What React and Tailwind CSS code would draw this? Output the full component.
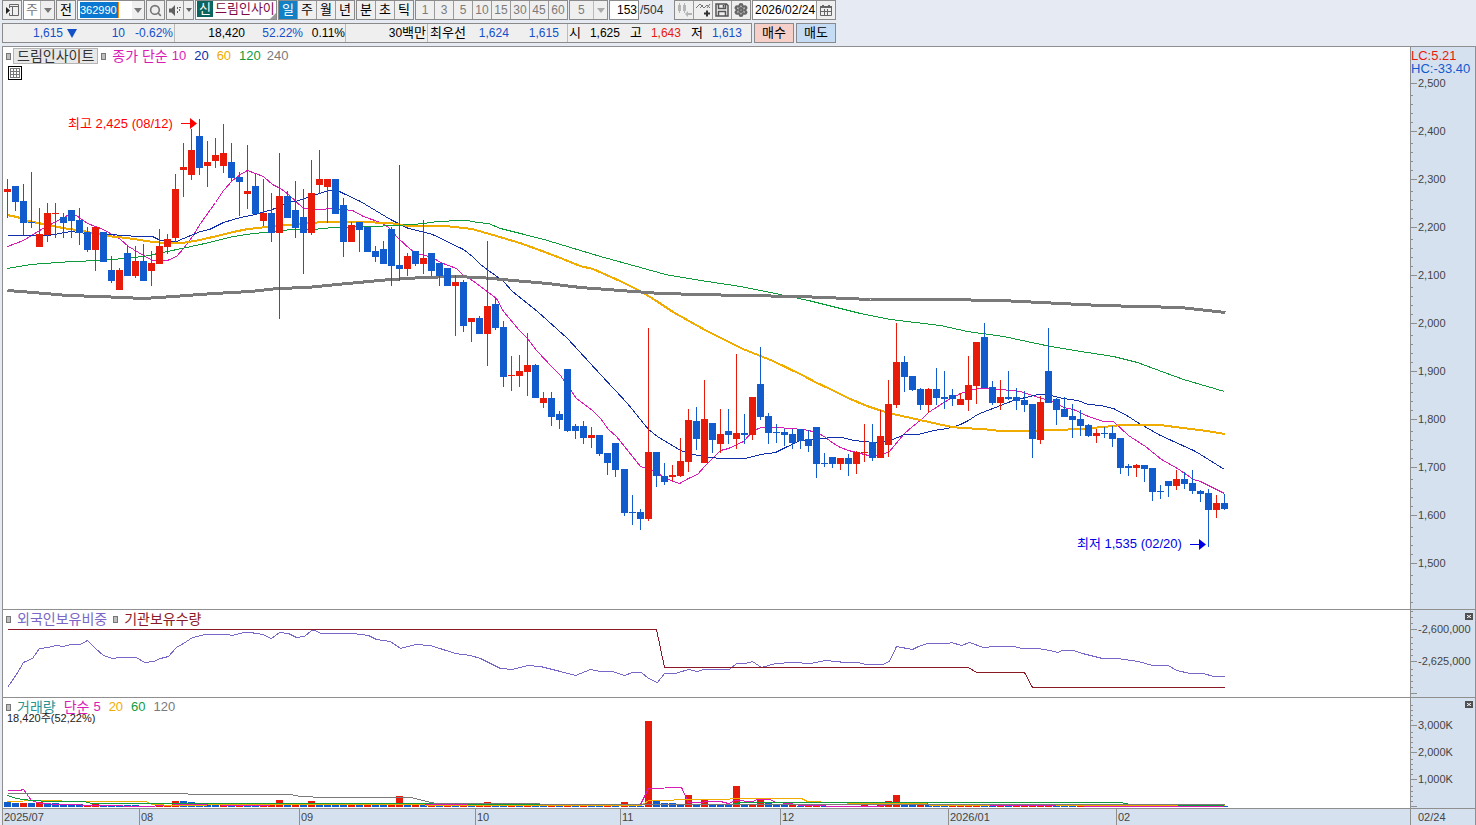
import React from 'react';
import { Search, Settings } from 'lucide-react';

const UP = '#e81a0a';
const DOWN = '#125bcd';
const LINE = '#8f8f8f';

// [direction, high, body top, body bottom, low] in chart pixels
const CANDLES = [
    [1, 179, 189, 192, 218], [0, 186, 186, 202, 211], [0, 184, 201, 223, 235], [0, 172, 222, 223, 228],
    [1, 208, 234, 247, 247], [1, 203, 213, 235, 242], [1, 203, 213, 214, 238], [0, 213, 217, 223, 238],
    [0, 210, 210, 221, 238], [0, 208, 220, 233, 245], [0, 227, 232, 250, 252], [1, 227, 227, 250, 271],
    [0, 232, 232, 262, 262], [0, 256, 270, 281, 283], [1, 268, 270, 290, 290], [0, 245, 253, 276, 276],
    [1, 246, 261, 276, 278], [0, 244, 261, 281, 281], [1, 251, 263, 271, 286], [1, 229, 246, 264, 264],
    [1, 234, 239, 247, 254], [1, 174, 189, 238, 242], [1, 143, 167, 170, 197], [1, 129, 150, 175, 180],
    [0, 119, 136, 168, 175], [1, 141, 162, 166, 187], [1, 138, 155, 161, 168], [1, 124, 153, 166, 173],
    [0, 143, 162, 178, 181], [0, 172, 177, 182, 216], [1, 145, 191, 194, 209], [0, 174, 186, 214, 214],
    [1, 179, 213, 221, 226], [0, 193, 213, 233, 242], [1, 153, 196, 233, 319], [0, 191, 196, 218, 218],
    [0, 181, 210, 228, 238], [0, 189, 217, 233, 274], [1, 160, 193, 233, 235], [1, 150, 179, 185, 194],
    [1, 179, 179, 187, 223], [0, 179, 179, 214, 214], [0, 198, 205, 242, 257], [1, 222, 225, 242, 242],
    [0, 222, 222, 230, 252], [0, 227, 227, 252, 252], [0, 246, 251, 257, 262], [0, 241, 249, 264, 264],
    [0, 227, 229, 266, 286], [0, 165, 265, 269, 281], [1, 253, 256, 269, 276], [0, 251, 251, 264, 266],
    [1, 220, 258, 264, 274], [0, 253, 253, 271, 276], [0, 263, 263, 276, 286], [0, 268, 268, 286, 286],
    [1, 275, 282, 286, 336], [0, 280, 282, 326, 332], [1, 318, 318, 322, 342], [0, 316, 318, 334, 334],
    [1, 241, 306, 334, 366], [0, 298, 304, 328, 330], [0, 321, 327, 377, 387], [1, 356, 375, 376, 391],
    [1, 355, 371, 376, 387], [1, 333, 365, 372, 396], [0, 364, 365, 398, 398], [1, 392, 398, 403, 408],
    [0, 392, 398, 417, 426], [0, 411, 414, 420, 429], [0, 369, 369, 431, 432], [0, 424, 426, 431, 439],
    [0, 421, 426, 438, 444], [1, 427, 435, 438, 448], [0, 435, 435, 454, 456], [0, 453, 453, 463, 475],
    [0, 443, 443, 470, 477], [0, 469, 469, 513, 516], [0, 495, 512, 513, 525], [0, 509, 512, 519, 530],
    [1, 328, 452, 519, 521], [0, 452, 452, 476, 487], [0, 463, 476, 482, 485], [1, 465, 475, 477, 481],
    [1, 438, 461, 476, 477], [1, 409, 420, 462, 472], [0, 407, 421, 439, 450], [1, 380, 419, 463, 463],
    [0, 423, 423, 440, 453], [1, 409, 434, 444, 453], [0, 409, 431, 435, 444], [1, 354, 433, 439, 449],
    [0, 414, 433, 435, 444], [1, 397, 397, 435, 440], [0, 347, 384, 417, 420], [0, 413, 416, 433, 444],
    [0, 424, 432, 433, 443], [0, 429, 432, 435, 446], [0, 429, 434, 443, 449], [0, 429, 429, 441, 449],
    [0, 430, 439, 446, 452], [0, 427, 427, 464, 478], [0, 453, 463, 464, 467], [0, 457, 457, 464, 468],
    [1, 458, 458, 464, 470], [0, 454, 458, 464, 476], [1, 451, 452, 464, 474], [1, 424, 452, 453, 462],
    [0, 424, 442, 458, 461], [1, 410, 436, 458, 458], [1, 380, 404, 445, 457], [1, 323, 362, 405, 408],
    [0, 356, 362, 377, 392], [0, 376, 376, 390, 391], [0, 388, 389, 405, 410], [1, 388, 389, 405, 413],
    [0, 368, 389, 398, 405], [0, 371, 397, 399, 409], [0, 389, 395, 399, 406], [1, 393, 399, 405, 405],
    [1, 356, 385, 400, 411], [1, 342, 342, 386, 404], [0, 323, 337, 388, 388], [0, 381, 387, 403, 405],
    [1, 380, 397, 403, 410], [0, 371, 397, 399, 400], [0, 388, 397, 401, 410], [0, 391, 400, 405, 412],
    [0, 404, 404, 439, 458], [1, 396, 402, 440, 444], [0, 328, 371, 403, 403], [0, 398, 399, 410, 425],
    [0, 397, 409, 417, 417], [0, 404, 416, 420, 438], [0, 410, 419, 426, 436], [0, 424, 425, 436, 437],
    [1, 429, 433, 436, 443], [0, 427, 433, 434, 438], [0, 426, 433, 439, 447], [0, 438, 438, 468, 474],
    [0, 464, 466, 468, 476], [1, 464, 465, 468, 477], [0, 465, 465, 469, 482], [0, 468, 468, 492, 501],
    [0, 485, 491, 492, 499], [0, 481, 481, 486, 497], [1, 470, 479, 486, 490], [0, 472, 479, 484, 489],
    [0, 470, 483, 491, 494], [0, 490, 491, 494, 502], [0, 489, 493, 510, 547], [1, 495, 503, 510, 518],
    [0, 494, 503, 509, 510],
];

// bar heights, negative = volume below the previous day
const VOLUMES = [
    -5, -4, 4, -4, 5, -4, -4, -3, -3, -3, 2, 3, -2, -2, -2, -2, -2, 1, -1, 1,
    1, 6, -6, -5, -3, -3, -3, 3, -1, 1, -1, -1, 2, 2, 7, -3, 3, -3, 6, -3,
    -3, -3, -2, 3, -2, 2, -2, -2, 3, 11, -4, 3, -3, 3, -2, 2, -2, 4, -2, 3,
    5, -3, -3, 2, -2, 2, -2, -1, 2, -1, 3, -2, 1, -1, -1, 1, -1, 5, -1, -1,
    86, -6, -4, -4, -3, 12, -3, 7, -3, -2, -2, 21, -2, 3, 8, -4, -2, -2, 2, -1,
    1, 3, -1, 1, -1, 1, -1, 2, -1, 2, 6, 12, -2, -2, 3, -2, -1, -1, 1, 1,
    3, 3, -3, -1, 2, -1, 1, 1, 2, 1, 1, -1, -1, -1, 1, 1, -1, 1, -1, 1,
    -1, -1, -1, 1, 1, 1, 1, -1, 1, -1, 1, -1, -1,
];

const PRICE_LINES = [
    {
        color: '#da1ab4',
        width: 1,
        points: '7,246 23,240 39,230 50,224 67,215 76,215 87,223 103,229 120,239 128,246 143,255 152,260 167,260 176,256 183,248 192,236 200,223 215,202 223,190 232,180 240,174 247,170 263,176 272,184 280,188 288,194 303,208 320,209 332,208 352,210 363,216 380,222 388,227 398,238 410,249 417,253 432,257 440,262 456,268 463,275 472,280 488,292 496,298 503,311 519,330 527,338 536,350 552,367 560,375 576,398 592,410 600,418 608,429 616,436 640,466 655,471 665,478 679,483 688,478 697,474 705,465 712,458 720,450 728,448 743,441 753,430 761,427 777,427 803,429 817,432 825,437 833,443 840,447 848,450 868,455 880,455 889,451 904,433 912,426 921,419 928,412 945,401 960,393 977,388 1000,389 1020,391 1032,395 1048,400 1057,403 1063,407 1073,409 1088,416 1103,421 1113,421 1128,435 1145,446 1161,459 1177,468 1193,479 1200,481 1208,485 1224,493',
    },
    {
        color: '#0f2ea8',
        width: 1,
        points: '7,235 48,235 70,231 87,233 110,234 137,236 152,236 160,240 176,241 183,238 200,231 209,229 223,222 240,217 255,214 272,209 287,202 295,201 310,196 328,190 337,190 343,193 360,201 390,219 408,228 417,230 432,234 463,249 472,256 480,264 503,281 512,291 537,311 567,338 600,374 627,403 648,429 657,436 680,450 697,455 710,457 720,458 745,458 760,454 775,452 785,447 800,440 820,438 833,437 842,437 853,440 873,442 890,440 904,434 918,434 933,430 947,428 960,424 968,420 977,414 1000,405 1013,400 1025,397 1038,394 1050,395 1063,398 1077,400 1088,404 1100,405 1113,408 1128,416 1137,422 1160,435 1193,450 1200,454 1208,459 1224,469',
    },
    {
        color: '#f0ac00',
        width: 2,
        points: '7,215 17,217 28,221 43,224 63,228 83,231 107,236 127,238 153,242 167,243 182,243 200,240 217,236 233,232 248,229 267,227 287,225 300,224 323,222 360,222 390,223 408,226 445,226 472,229 493,235 520,243 542,251 563,259 580,266 593,269 620,281 640,291 655,300 673,312 705,330 743,349 773,361 802,375 817,383 828,388 848,398 867,406 882,411 893,414 920,420 947,426 960,428 983,429 1000,431 1020,431 1057,430 1080,429 1103,427 1122,425 1160,425 1183,428 1207,431 1225,434',
    },
    {
        color: '#0f9b3c',
        width: 1,
        points: '7,268 30,264 72,261 100,260 123,258 143,256 167,251 200,244 233,236 253,233 277,231 290,229 313,229 333,227 373,226 413,224 423,223 437,221 460,220 467,220 477,222 488,223 500,228 520,233 547,240 570,247 600,256 640,267 665,274 700,280 740,286 770,292 808,300 860,313 890,319 940,325 967,331 1003,336 1050,346 1087,352 1113,356 1137,362 1153,368 1183,379 1207,386 1224,391',
    },
    {
        color: '#7a7a7a',
        width: 3,
        points: '7,290 33,292 67,295 100,296 143,298 173,296 213,293 250,291 277,288 307,287 347,283 390,279 423,277 453,276 480,277 513,280 547,283 580,287 620,290 660,293 740,295 800,296 870,299 940,299 1000,300 1040,302 1100,305 1180,307 1225,312',
    },
];

const HOLDING_LINES = [
    {
        color: '#7a66c6',
        points: '7,687 16,674 23,662 32,658 39,648 48,647 55,645 63,646 70,644 80,644 87,640 95,648 103,655 112,658 120,657 136,657 144,662 153,661 160,658 168,656 176,647 183,643 192,637 205,634 227,634 232,635 243,632 250,632 262,634 271,638 279,632 288,633 296,637 304,636 311,630 315,630 320,633 352,633 368,635 376,639 390,641 400,648 415,644 430,645 455,653 470,655 480,658 490,663 500,668 512,669 527,665 540,666 560,671 575,675 590,669 600,671 612,671 624,675 632,672 641,672 648,678 657,682 664,673 675,673 688,669 697,671 703,669 729,669 736,663 745,663 752,661 761,667 775,663 792,662 810,663 825,660 845,662 858,662 865,664 882,664 889,661 896,646 912,649 918,646 927,643 948,643 951,642 961,645 969,642 983,647 995,646 1013,646 1022,648 1037,648 1050,650 1057,652 1062,650 1073,650 1082,653 1102,658 1117,658 1138,661 1152,665 1168,665 1176,670 1190,673 1203,673 1213,676 1224,676',
    },
    {
        color: '#8a1a28',
        points: '7,629 656,629 664,667 968,667 976,672 1024,672 1032,687 1224,687',
    },
];

const VOLUME_LINES = [
    {
        color: '#da1ab4',
        points: '7,790 19,790 23,789 31,800 40,803 60,804 100,805 145,806 165,805 180,804 260,805 280,804 390,804 400,803 440,804 640,804 648,788 681,787 688,802 720,801 728,803 735,800 752,801 757,799 770,799 775,802 790,803 800,805 850,806 876,806 888,804 925,803 935,805 1224,806',
    },
    {
        color: '#f0ac00',
        points: '7,801 40,800 83,801 145,801 152,804 175,805 240,804 600,805 641,805 648,800 700,799 760,798 801,798 807,801 860,803 925,803 930,805 1050,804 1060,805 1224,805',
    },
    {
        color: '#0f9b3c',
        points: '7,795 16,798 31,800 50,801 83,801 92,803 330,803 600,804 732,804 740,802 1120,802 1130,804 1224,805',
    },
    {
        color: '#7a7a7a',
        points: '7,793 83,793 290,794 300,796 325,797 410,797 435,803 640,804 1224,804',
    },
];

const MONTHS = [
    { label: '2025/07', cell: 'w-[136px]' },
    { label: '08', cell: 'w-[160px] border-l' },
    { label: '09', cell: 'w-[176px] border-l' },
    { label: '10', cell: 'w-[145px] border-l' },
    { label: '11', cell: 'w-[160px] border-l' },
    { label: '12', cell: 'w-[168px] border-l' },
    { label: '2026/01', cell: 'w-[168px] border-l' },
    { label: '02', cell: 'flex-1 border-l' },
];

const PRICES = ['2,500', '2,400', '2,300', '2,200', '2,100', '2,000', '1,900', '1,800', '1,700', '1,600', '1,500'];

const candleX = (i) => 7 + i * 8 + (i >= 77 ? 1 : 0);

// step offsets below each major tick
const minorTicks = (majors, steps) => majors.flatMap((y) => steps.map((s) => y + s));

const PRICE_MAJORS = PRICES.map((_, i) => 36 + i * 48);

const Polyline = ({ color, width = 1, points }) => (
    <polyline
        points={points}
        fill="none"
        stroke={color}
        strokeWidth={width}
        shapeRendering="crispEdges"
        transform={width === 2 ? undefined : 'translate(0.5 0.5)'}
    />
);

const Ticks = ({ majors, minors }) => (
    <svg className="col-start-1 row-start-1 h-0 min-h-full w-2" shapeRendering="crispEdges" aria-hidden="true">
        {minors.map((y) => <rect key={y} x="0" y={y} width="2" height="1" fill={LINE} />)}
        {majors.map((y) => <rect key={y} x="0" y={y} width="6" height="1" fill={LINE} />)}
    </svg>
);

const Caret = ({ className = 'text-[#777]' }) => (
    <svg viewBox="0 0 8 5" className={`pointer-events-none h-[5px] w-2 shrink-0 ${className}`} fill="currentColor" aria-hidden="true">
        <path d="M0 0h8L4 5z" />
    </svg>
);

const Marker = () => <span className="h-[7px] w-[5px] shrink-0 border border-[#777] bg-[#bdbdbd]" />;

const ToolButton = ({ label, children, className = 'bg-[#efefef] text-black' }) => (
    <button
        type="button"
        aria-label={label}
        className={`flex h-full flex-1 items-center justify-center border-l border-[#9a9a9a] first:border-l-0 ${className}`}
    >
        {children}
    </button>
);

const box = 'flex h-5 shrink-0 items-stretch border border-[#8a8a8a]';

const CloseButton = () => (
    <button type="button" aria-label="닫기" className="col-start-1 row-start-1 mt-[3px] mr-0.5 flex h-[7px] w-2 items-center justify-center self-start justify-self-end bg-[#505050]">
        <svg viewBox="0 0 4 3" className="h-[3px] w-1" stroke="#fff" strokeWidth="1" aria-hidden="true">
            <path d="M0 0l4 3M4 0L0 3" />
        </svg>
    </button>
);

const Toolbar = () => (
    <div className="flex h-5 items-center gap-px pl-0.5 text-[13px] leading-4">
        <div className={`${box} w-5`}>
            <ToolButton label="화면 이동">
                <svg viewBox="0 0 14 12" className="h-3 w-3.5" fill="none" stroke="#333" aria-hidden="true">
                    <path d="M4.5 4V.5h9v11h-9V9M4.5 2.5h9M7.5 2.5v9" stroke="#666" />
                    <path d="M1 3l4 3.500L1 10z" fill="#222" stroke="none" />
                </svg>
            </ToolButton>
        </div>
        <div className={`${box} w-8 bg-white`}>
            <select aria-label="종목 구분" className="w-4 appearance-none bg-white pl-0.5 text-[#777] outline-none">
                <option>주</option>
            </select>
            <span className="flex flex-1 items-center justify-center border-l border-[#bbb] bg-[#efefef]"><Caret /></span>
        </div>
        <div className={`${box} w-5`}><ToolButton>전</ToolButton></div>
        <div className={`${box} w-[68px] items-center bg-white`}>
            <label className="flex flex-1 items-center pl-0.5">
                <span className="sr-only">종목코드</span>
                <input
                    defaultValue="362990"
                    className="h-4 w-[39px] border-r border-orange-400 bg-[#0a78d0] p-0 text-[11px] text-white outline-none"
                />
            </label>
            <span className="flex h-full w-3 items-center justify-center bg-[#efefef]"><Caret /></span>
        </div>
        <div className={`${box} w-[19px]`}>
            <ToolButton label="종목 검색"><Search size={13} className="shrink-0 text-[#777]" strokeWidth={3} /></ToolButton>
        </div>
        <div className={`${box} w-7`}>
            <ToolButton label="소리">
                <svg viewBox="0 0 13 11" className="h-[11px] w-[13px]" fill="#606060" aria-hidden="true">
                    <path d="M0 3.500h2.500L6 0v11L2.500 7.500H0zM8 2h1v2H8zM8 6h1v2H8zM10 2h2v1h-2zM10 4h1v2h-1z" />
                </svg>
            </ToolButton>
            <span className="flex w-[10px] items-center justify-center border-l border-[#9a9a9a] bg-[#efefef]">
                <svg viewBox="0 0 6 4" className="h-1 w-1.5" fill="#666" aria-hidden="true"><path d="M0 0h6L3 4z" /></svg>
            </span>
        </div>
        <div className={`${box} relative w-[82px] items-center gap-0.5 overflow-hidden bg-white pl-px whitespace-nowrap`}>
            <span className="flex h-4 w-4 shrink-0 items-center justify-center bg-[#0a6560] text-white">신</span>
            <span className="text-[13px] leading-4 text-[#7d0a45]">드림인사이</span>
            <svg viewBox="0 0 6 6" className="absolute right-0 bottom-0 h-1.5 w-1.5" fill="#999" aria-hidden="true"><path d="M6 0v6H0z" /></svg>
        </div>
        <div className={`${box} w-[77px]`}>
            <ToolButton className="bg-[#1180c4] text-white">일</ToolButton>
            <ToolButton>주</ToolButton>
            <ToolButton>월</ToolButton>
            <ToolButton>년</ToolButton>
        </div>
        <div className={`${box} w-[58px]`}>
            <ToolButton>분</ToolButton>
            <ToolButton>초</ToolButton>
            <ToolButton>틱</ToolButton>
        </div>
        <div className={`${box} w-[153px] text-xs`}>
            {['1', '3', '5', '10', '15', '30', '45', '60'].map((n) => (
                <ToolButton key={n} className="bg-[#efefef] text-[#7b7b7b]">{n}</ToolButton>
            ))}
        </div>
        <div className={`${box} w-[39px] text-xs text-[#7b7b7b]`}>
            <select aria-label="분봉" className="w-[23px] appearance-none bg-[#efefef] pl-2 outline-none">
                <option>5</option>
            </select>
            <span className="flex flex-1 items-center justify-center border-l border-[#bbb] bg-[#efefef]"><Caret className="text-[#aaa]" /></span>
        </div>
        <div className={`${box} w-[30px] bg-white text-xs`}>
            <input aria-label="봉 개수" defaultValue="153" className="w-full bg-white p-0 pr-px text-right outline-none" />
        </div>
        <span className="w-[33px] text-xs leading-4 text-[#333]">/504</span>
        <div className={`${box} w-[77px]`}>
            <ToolButton label="봉 유형">
                <svg viewBox="0 0 15 14" className="h-3.5 w-[15px]" fill="#b5b5b5" aria-hidden="true">
                    <path d="M2 0h1v10H2zM1 2h3v6H1zM7 0h1v10H7zM6 2h3v6H6zM8 11l3-3v2h4v2h-4v2z" />
                </svg>
            </ToolButton>
            <ToolButton label="지표 추가">
                <svg viewBox="0 0 15 14" className="h-3.5 w-[15px]" fill="none" aria-hidden="true">
                    <path d="M0 5l4-4 4 4 3-3 3 3M4 5l3-3M11 5l3-4" stroke="#777" />
                    <path d="M8 10.500h6M11 7.500v6" stroke="#333" strokeWidth="2" />
                </svg>
            </ToolButton>
            <ToolButton label="저장">
                <svg viewBox="0 0 14 14" className="h-3.5 w-3.5" fill="none" stroke="#555" strokeWidth="1.500" aria-hidden="true">
                    <path d="M1 1h10.500L13 2.500V13H1zM3.500 1v4.500h7V1M3.500 13V8.500h7V13M8.500 2v2.500" />
                </svg>
            </ToolButton>
            <ToolButton label="설정"><Settings size={14} strokeWidth={4} className="shrink-0 text-[#666]" /></ToolButton>
        </div>
        <div className={`${box} w-[84px] bg-white`}>
            <input aria-label="조회일" defaultValue="2026/02/24" className="w-[63px] bg-white p-0 pl-0.5 text-xs outline-none" />
            <ToolButton label="달력">
                <svg viewBox="0 0 12 11" className="h-[11px] w-3" fill="none" stroke="#666" aria-hidden="true">
                    <path d="M.5 2.500h11v8H.5zM4.500 4v6M7.500 4v6M1 6.500h10" />
                    <path d="M0 2h12M3 0v2M9 0v2" strokeWidth="2" />
                </svg>
            </ToolButton>
        </div>
    </div>
);

const QuoteBar = () => (
    <div className="flex h-5 items-stretch gap-0.5 pl-0.5 text-xs">
        <div className="flex w-[750px] shrink-0 items-center border border-[#8a8a8a] bg-[#efefef] text-[#1450c8]">
            <div className="flex h-full w-[172px] items-center border-r border-[#bbb]">
                <span className="w-[60px] text-right">1,615</span>
                <svg viewBox="0 0 10 9" className="ml-1 h-[9px] w-2.5" fill="currentColor" aria-hidden="true"><path d="M0 0h10L5 9z" /></svg>
                <span className="w-12 text-right">10</span>
                <span className="w-12 text-right">-0.62%</span>
            </div>
            <div className="flex h-full w-[171px] items-center border-r border-[#bbb]">
                <span className="w-[70px] text-right text-black">18,420</span>
                <span className="w-[58px] text-right">52.22%</span>
                <span className="flex-1 text-right text-black">0.11%</span>
            </div>
            <div className="flex h-full w-[82px] items-center justify-end border-r border-[#bbb] pr-px text-black">
                30<span className="text-[13px]">백만</span>
            </div>
            <div className="flex h-full w-[140px] items-center border-r border-[#bbb] pl-0.5">
                <span className="text-[13px] text-black">최우선</span>
                <span className="w-[43px] text-right">1,624</span>
                <span className="w-[50px] text-right">1,615</span>
            </div>
            <div className="flex h-full flex-1 items-center pl-px">
                <span className="text-[13px] text-black">시</span>
                <span className="w-[39px] text-right text-black">1,625</span>
                <span className="ml-2.5 text-[13px] text-black">고</span>
                <span className="w-[39px] text-right text-[#e81a0a]">1,643</span>
                <span className="ml-2.5 text-[13px] text-black">저</span>
                <span className="w-[39px] text-right">1,613</span>
            </div>
        </div>
        <button type="button" className="w-10 border border-[#8a8a8a] bg-[#f6cfc9] text-[13px] leading-4">매수</button>
        <button type="button" className="w-10 border border-[#8a8a8a] bg-[#c6dcf4] text-[13px] leading-4">매도</button>
    </div>
);

const PricePanel = () => (
    <div className="relative min-w-0 flex-1 overflow-hidden bg-white">
        <svg className="block h-[562px] w-full" role="img" aria-label="드림인사이트 일봉 차트">
            <g transform="translate(-3 -47)">
                {PRICE_LINES.map((l) => <Polyline key={l.color} {...l} />)}
                <g shapeRendering="crispEdges">
                    {CANDLES.map(([up, high, top, bottom, low], i) => (
                        <g key={i} fill={up ? UP : DOWN}>
                            <rect x={candleX(i)} y={high} width="1" height={low - high} />
                            <rect x={candleX(i) - 3} y={top} width="7" height={bottom - top} />
                        </g>
                    ))}
                </g>
                <g fill="#f00" className="text-[13px]">
                    <text x="68" y="128">최고 2,425 (08/12)</text>
                    <path d="M181 123h9v-5l7 5.500l-7 5.500v-5h-9z" />
                </g>
                <g fill="#0000e6" className="text-[13px]">
                    <text x="1077" y="548">최저 1,535 (02/20)</text>
                    <path d="M1190 544h9v-5l7 5.500l-7 5.500v-5h-9z" />
                </g>
            </g>
        </svg>
        <div className="absolute top-px left-[3px] flex h-4 items-center text-[13px] leading-4">
            <Marker />
            <span className="ml-0.5 h-4 border border-[#b5b5b5] bg-[#e8e8e8] px-[3px] text-sm leading-[14px] text-[#333]">드림인사이트</span>
            <span className="ml-[3px] flex"><Marker /></span>
            <span className="ml-1.5 text-sm leading-4 text-[#da1ab4]">종가 단순</span>
            <span className="ml-1 text-[#da1ab4]">10</span>
            <span className="ml-2 text-[#0f2ea8]">20</span>
            <span className="ml-2 text-[#f0ac00]">60</span>
            <span className="ml-2 text-[#0f9b3c]">120</span>
            <span className="ml-1.5 text-[#7a7a7a]">240</span>
        </div>
        <button type="button" aria-label="데이터 표" className="absolute top-[19px] left-[5px] h-3.5 w-3.5 bg-white">
            <svg viewBox="0 0 14 14" className="h-3.5 w-3.5" fill="none" shapeRendering="crispEdges" aria-hidden="true">
                <path d="M.5.5h13v13H.5z" stroke="#000" />
                <path d="M2.500 2.500h9v9h-9zM2.500 5.500h9M2.500 8.500h9M5.500 2.500v9M8.500 2.500v9" stroke="#777" />
            </svg>
        </button>
    </div>
);

const axisBox = 'grid w-[66px] shrink-0 border-x border-[#8f8f8f] bg-[#d6e1ef] text-[11px] leading-4 text-[#444]';

export default function App() {
    return (
        <main className="min-h-screen bg-[#e6eaf2] font-['Liberation_Sans','Noto_Sans_CJK_KR',sans-serif] text-black">
            <header className="flex flex-col gap-[3px] overflow-hidden pb-[3px]">
                <Toolbar />
                <QuoteBar />
            </header>

            <section className="ml-0.5 border-t border-[#8f8f8f]">
                <div className="flex border-b border-[#8f8f8f]">
                    <div className="flex min-w-0 flex-1 border-l border-[#8f8f8f]"><PricePanel /></div>
                    <div className={axisBox}>
                        <Ticks
                            majors={PRICE_MAJORS}
                            minors={minorTicks(PRICE_MAJORS, [12, 21, 30, 39]).filter((y) => y < 562)}
                        />
                        <div className="col-start-1 row-start-1 flex flex-col">
                            <div className="h-7 pt-0.5 text-[13px] leading-[13px]">
                                <div className="text-[#e81a0a]">LC:5.21</div>
                                <div className="text-[#125bcd]">HC:-33.40</div>
                            </div>
                            <div className="flex flex-col gap-8 pl-[7px]">
                                {PRICES.map((p) => <span key={p}>{p}</span>)}
                            </div>
                        </div>
                    </div>
                </div>

                {/* Foreign / institution holdings */}
                <div className="flex border-b border-[#8f8f8f]">
                    <div className="relative min-w-0 flex-1 border-l border-[#8f8f8f] bg-white">
                        <svg className="block h-[87px] w-full" role="img" aria-label="보유 추이">
                            <g transform="translate(-3 -610)">
                                {HOLDING_LINES.map((l) => <Polyline key={l.color} {...l} />)}
                            </g>
                        </svg>
                        <div className="absolute top-px left-[3px] flex items-center text-sm leading-4">
                            <Marker />
                            <span className="ml-1.5 text-[#7a66c6]">외국인보유비중</span>
                            <span className="ml-1.5 flex"><Marker /></span>
                            <span className="ml-1.5 text-[#8a1a28]">기관보유수량</span>
                        </div>
                    </div>
                    <div className={axisBox}>
                        <Ticks
                            majors={[19, 51, 83]}
                            minors={[1, 7, 13, ...minorTicks([19, 51], [8, 14, 20, 26])]}
                        />
                        <div className="col-start-1 row-start-1 flex flex-col gap-4 pt-[11px] pl-[7px] whitespace-nowrap">
                            <span>-2,600,000</span>
                            <span>-2,625,000</span>
                        </div>
                        <CloseButton />
                    </div>
                </div>

                {/* Volume */}
                <div className="flex border-b border-[#8f8f8f]">
                    <div className="relative min-w-0 flex-1 border-l border-[#8f8f8f] bg-white">
                        <svg className="block h-[110px] w-full" role="img" aria-label="거래량 차트">
                            <g transform="translate(-3 -698)">
                                <g shapeRendering="crispEdges">
                                    {VOLUMES.map((v, i) => (
                                        <rect
                                            key={i}
                                            x={candleX(i) - 3}
                                            y={807 - Math.abs(v)}
                                            width="7"
                                            height={Math.abs(v)}
                                            fill={v > 0 ? UP : DOWN}
                                        />
                                    ))}
                                </g>
                                {VOLUME_LINES.map((l) => <Polyline key={l.color} {...l} />)}
                            </g>
                        </svg>
                        <div className="absolute top-px left-[3px] flex items-center text-[13px] leading-4">
                            <Marker />
                            <span className="ml-1.5 text-sm leading-4 text-[#2a9494]">거래량</span>
                            <span className="ml-2 text-sm leading-4 text-[#da1ab4]">단순</span>
                            <span className="ml-1 text-[#da1ab4]">5</span>
                            <span className="ml-2 text-[#f0ac00]">20</span>
                            <span className="ml-2 text-[#0f9b3c]">60</span>
                            <span className="ml-2 text-[#7a7a7a]">120</span>
                        </div>
                        <div className="absolute top-3 left-1 text-[11px] leading-4 text-[#222]">18,420주(52,22%)</div>
                    </div>
                    <div className={axisBox}>
                        <Ticks
                            majors={[27, 54, 81, 108]}
                            minors={[7, 12, 17, 22, ...minorTicks([27, 54, 81], [7, 12, 17, 22])]}
                        />
                        <div className="col-start-1 row-start-1 flex flex-col gap-[11px] pt-[19px] pl-[7px]">
                            <span>3,000K</span>
                            <span>2,000K</span>
                            <span>1,000K</span>
                        </div>
                        <CloseButton />
                    </div>
                </div>

                {/* Time axis */}
                <div className="flex h-4 bg-[#d6e1ef] text-[11px] leading-4 text-[#444]">
                    <div className="flex min-w-0 flex-1 border-l border-[#8f8f8f]">
                        {MONTHS.map(({ label, cell }) => (
                            <span key={label} className={`border-[#8f8f8f] pl-px ${cell}`}>{label}</span>
                        ))}
                    </div>
                    <span className="w-[66px] shrink-0 border-x border-[#8f8f8f] pl-[7px]">02/24</span>
                </div>
            </section>
        </main>
    );
}
